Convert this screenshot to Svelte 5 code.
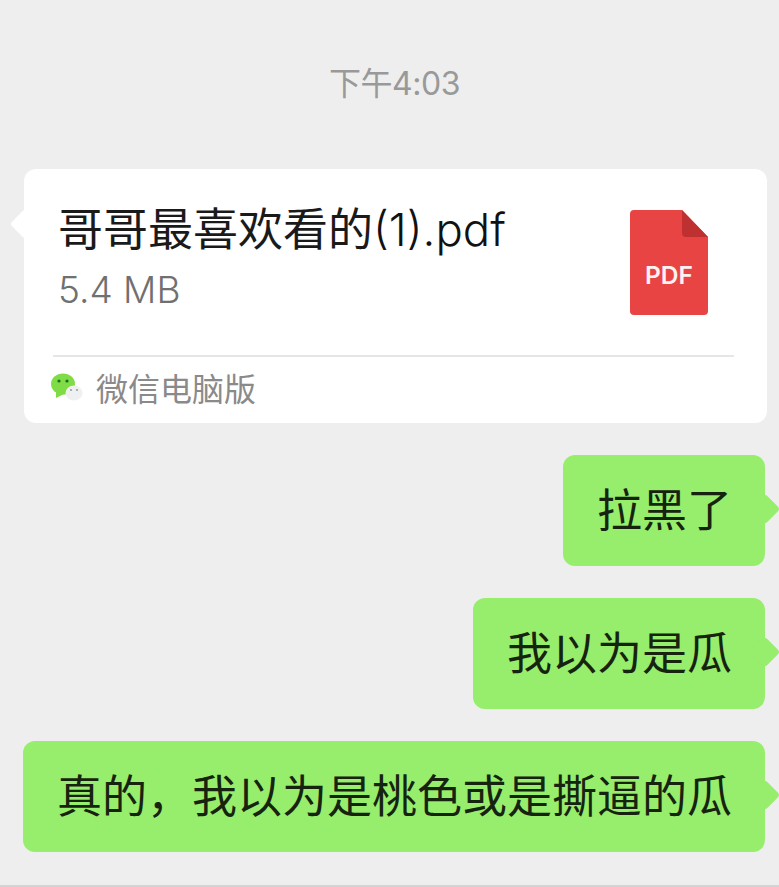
<script lang="ts">
	const bubbles = ['拉黑了', '我以为是瓜', '真的，我以为是桃色或是撕逼的瓜'];
</script>

<div class="chat">
	<div class="time">下午4:03</div>

	<div class="card">
		<div class="file">
			<div class="info">
				<div class="name">哥哥最喜欢看的<span class="ext">(1).pdf</span></div>
				<div class="size">5.4 MB</div>
			</div>
			<svg class="pdf" width="78" height="105" viewBox="0 0 78 105">
				<path d="M4 0H52L78 27V101a4 4 0 0 1-4 4H4a4 4 0 0 1-4-4V4a4 4 0 0 1 4-4Z" fill="#e94444" />
				<path d="M52 0L78 27H56a4 4 0 0 1-4-4Z" fill="#bf3131" />
				<text x="39" y="74" text-anchor="middle" class="pdf-label">PDF</text>
			</svg>
		</div>
		<div class="source">
			<svg width="32" height="28" viewBox="0 0 32 28">
				<ellipse cx="12" cy="11" rx="12" ry="10.5" fill="#80dc46" />
				<path d="M5 18L5 25L13 21Z" fill="#80dc46" />
				<circle cx="8" cy="8" r="1.6" fill="#14701c" />
				<circle cx="16" cy="8" r="1.6" fill="#14701c" />
				<ellipse cx="23" cy="20" rx="8.5" ry="7.5" fill="#eef0f2" />
				<circle cx="20" cy="17" r="1.1" fill="#9aa0a6" />
				<circle cx="26" cy="17" r="1.1" fill="#9aa0a6" />
			</svg>
			<span>微信电脑版</span>
		</div>
	</div>

	{#each bubbles as text}
		<div class="bubble">{text}</div>
	{/each}
</div>

<style>
	:global(body) {
		background: #eeeeee;
	}

	.chat {
		box-sizing: border-box;
		height: 887px;
		display: flex;
		flex-direction: column;
		padding-top: 61px;
		background: #eeeeee;
		border-bottom: 2px solid #d4d4d4;
		font-family: Inter, 'Noto Sans CJK SC', sans-serif;
		overflow: hidden;
	}

	.time {
		height: 46px;
		line-height: 46px;
		text-align: center;
		margin-left: 10px;
		font-size: 32px;
		font-weight: 400;
		letter-spacing: -0.5px;
		color: #999;
	}

	.card {
		position: relative;
		margin: 62px 12px 0 24px;
		height: 254px;
		background: #fff;
		border-radius: 12px;
		box-sizing: border-box;
		padding: 0 33px 0 29px;
		display: flex;
		flex-direction: column;
	}

	.card::before {
		content: '';
		position: absolute;
		left: -11px;
		top: 43px;
		width: 24px;
		height: 24px;
		background: #fff;
		border-radius: 4px;
		transform: rotate(45deg) scale(0.9);
	}

	.file {
		position: relative;
		height: 186px;
		display: flex;
		justify-content: space-between;
		align-items: flex-start;
		border-bottom: 2px solid #e6e6e6;
	}

	.info {
		padding: 31px 0 0 5px;
	}

	.name {
		font-size: 45px;
		line-height: 60px;
		color: #1a1a1a;
		white-space: nowrap;
	}

	.ext {
		font-size: 45.5px;
		font-weight: 300;
		color: #111;
	}

	.size {
		font-size: 37px;
		font-weight: 300;
		line-height: 60px;
		color: #707070;
	}

	.pdf {
		margin: 41px 26px 0 0;
	}

	.pdf-label {
		font-family: Inter, sans-serif;
		font-size: 24.5px;
		font-weight: 600;
		fill: #fdf1f1;
	}

	.source {
		display: flex;
		align-items: center;
		gap: 13px;
		height: 60px;
		margin-left: -2px;
		font-size: 32px;
		color: #8a8a8a;
	}

	.bubble {
		position: relative;
		align-self: flex-end;
		box-sizing: border-box;
		height: 111px;
		margin: 32px 14px 0 0;
		padding: 0 33px 0 34px;
		line-height: 112px;
		font-size: 45px;
		color: #16240f;
		background: #97ed6c;
		border-radius: 12px;
		white-space: nowrap;
	}

	.bubble::after {
		content: '';
		position: absolute;
		right: -12px;
		top: 42px;
		width: 24px;
		height: 24px;
		background: #97ed6c;
		border-radius: 4px;
		transform: rotate(45deg) scale(0.9);
	}
</style>
